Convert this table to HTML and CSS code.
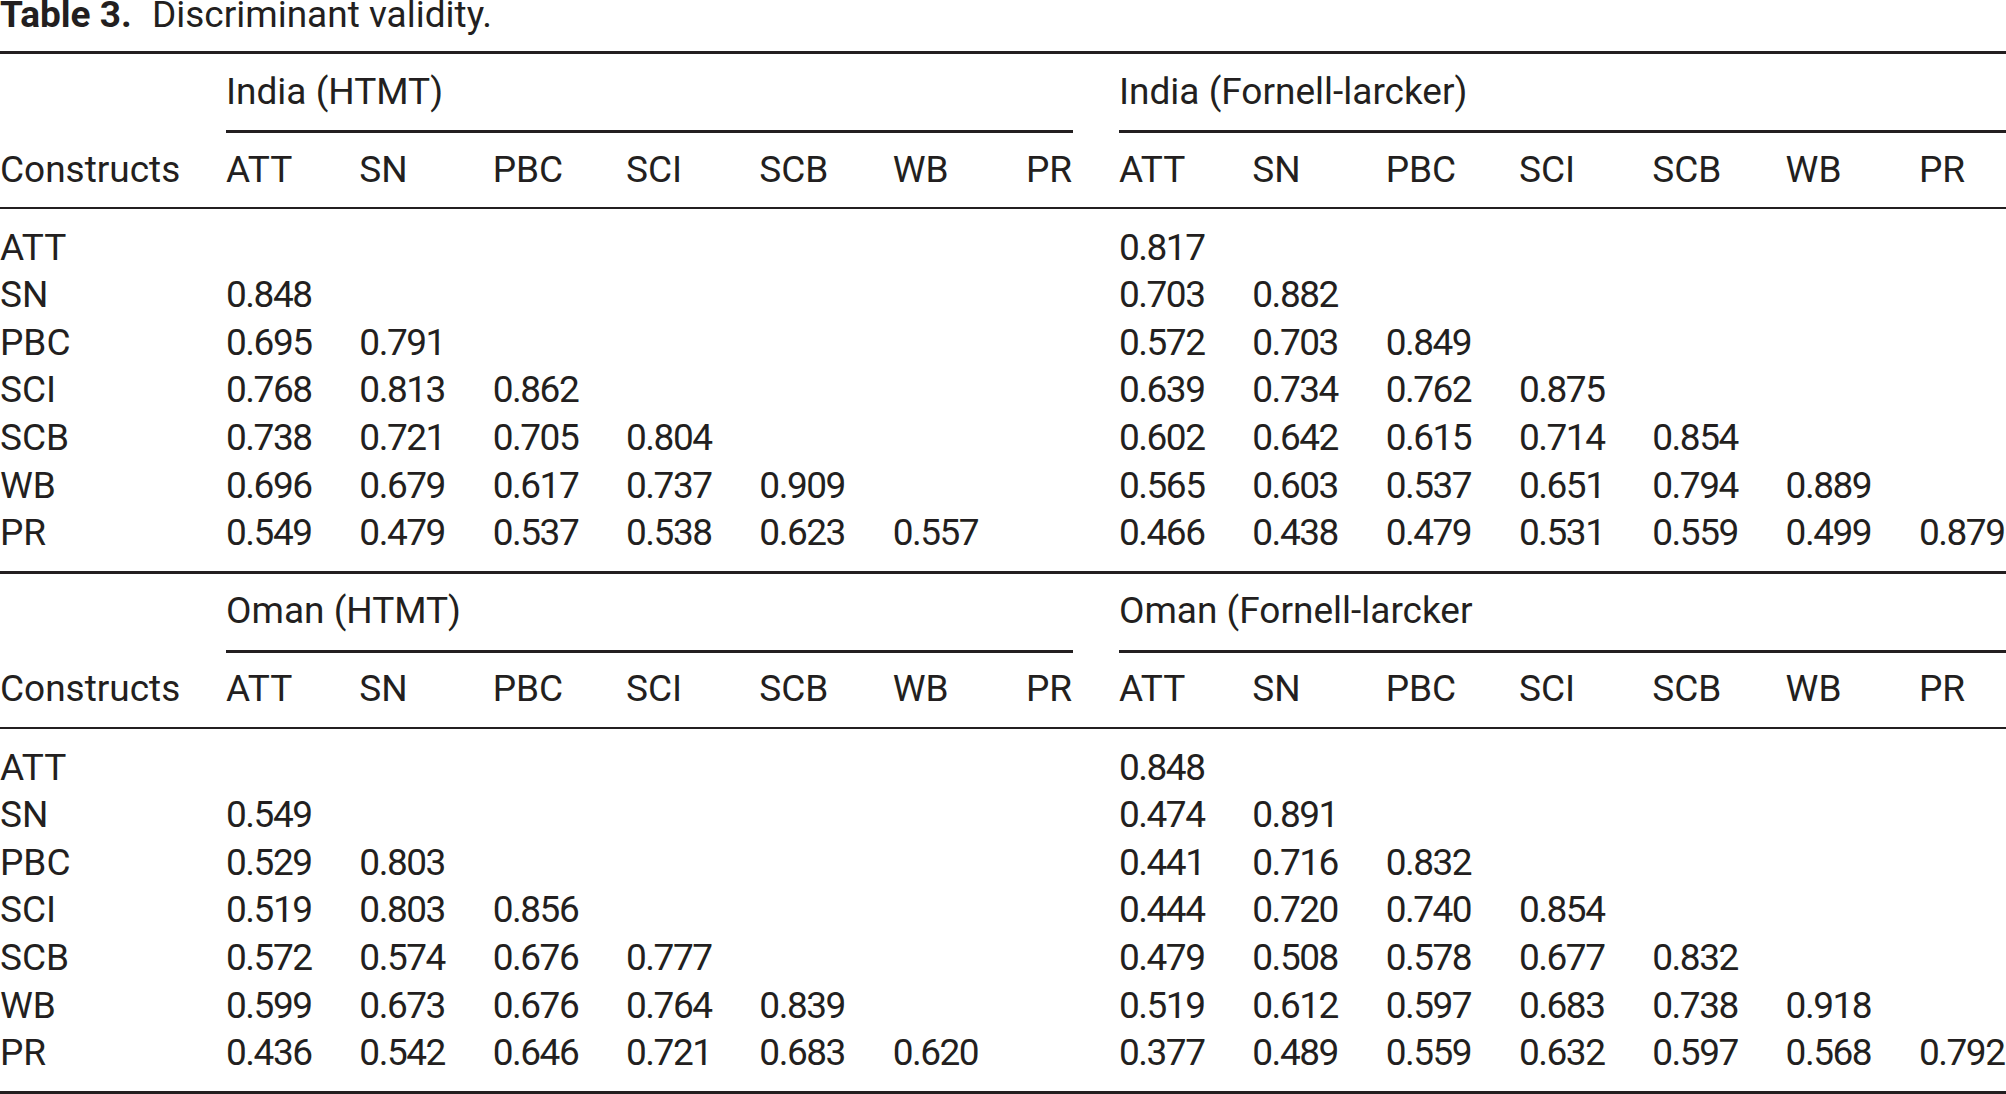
FILE: index.html
```html
<!DOCTYPE html>
<html lang="en">
<head>
<meta charset="utf-8">
<title>Table 3. Discriminant validity.</title>
<link rel="stylesheet" href="styles.css">
</head>
<body>
<div class="caption"><strong class="label">Table 3.</strong> Discriminant validity.</div>
<table class="dv">
  <colgroup>
    <col class="c-label">
    <col class="c-val"><col class="c-val"><col class="c-val"><col class="c-val"><col class="c-val"><col class="c-val">
    <col class="c-last">
    <col class="c-gap">
    <col class="c-val"><col class="c-val"><col class="c-val"><col class="c-val"><col class="c-val"><col class="c-val">
    <col class="c-end">
  </colgroup>
  <tbody>
    <tr class="group-row"><td></td><td colspan="7" class="group">India (HTMT)</td><td></td><td colspan="7" class="group">India (Fornell-larcker)</td></tr>
    <tr class="head-row"><th>Constructs</th><th>ATT</th><th>SN</th><th>PBC</th><th>SCI</th><th>SCB</th><th>WB</th><th>PR</th><th></th><th>ATT</th><th>SN</th><th>PBC</th><th>SCI</th><th>SCB</th><th>WB</th><th>PR</th></tr>
    <tr class="row first"><td>ATT</td><td></td><td></td><td></td><td></td><td></td><td></td><td></td><td></td><td class="num">0.817</td><td></td><td></td><td></td><td></td><td></td><td></td></tr>
    <tr class="row"><td>SN</td><td class="num">0.848</td><td></td><td></td><td></td><td></td><td></td><td></td><td></td><td class="num">0.703</td><td class="num">0.882</td><td></td><td></td><td></td><td></td><td></td></tr>
    <tr class="row"><td>PBC</td><td class="num">0.695</td><td class="num">0.791</td><td></td><td></td><td></td><td></td><td></td><td></td><td class="num">0.572</td><td class="num">0.703</td><td class="num">0.849</td><td></td><td></td><td></td><td></td></tr>
    <tr class="row"><td>SCI</td><td class="num">0.768</td><td class="num">0.813</td><td class="num">0.862</td><td></td><td></td><td></td><td></td><td></td><td class="num">0.639</td><td class="num">0.734</td><td class="num">0.762</td><td class="num">0.875</td><td></td><td></td><td></td></tr>
    <tr class="row"><td>SCB</td><td class="num">0.738</td><td class="num">0.721</td><td class="num">0.705</td><td class="num">0.804</td><td></td><td></td><td></td><td></td><td class="num">0.602</td><td class="num">0.642</td><td class="num">0.615</td><td class="num">0.714</td><td class="num">0.854</td><td></td><td></td></tr>
    <tr class="row"><td>WB</td><td class="num">0.696</td><td class="num">0.679</td><td class="num">0.617</td><td class="num">0.737</td><td class="num">0.909</td><td></td><td></td><td></td><td class="num">0.565</td><td class="num">0.603</td><td class="num">0.537</td><td class="num">0.651</td><td class="num">0.794</td><td class="num">0.889</td><td></td></tr>
    <tr class="row last"><td>PR</td><td class="num">0.549</td><td class="num">0.479</td><td class="num">0.537</td><td class="num">0.538</td><td class="num">0.623</td><td class="num">0.557</td><td></td><td></td><td class="num">0.466</td><td class="num">0.438</td><td class="num">0.479</td><td class="num">0.531</td><td class="num">0.559</td><td class="num">0.499</td><td class="num">0.879</td></tr>
  </tbody>
  <tbody>
    <tr class="group-row"><td></td><td colspan="7" class="group">Oman (HTMT)</td><td></td><td colspan="7" class="group">Oman (Fornell-larcker</td></tr>
    <tr class="head-row"><th>Constructs</th><th>ATT</th><th>SN</th><th>PBC</th><th>SCI</th><th>SCB</th><th>WB</th><th>PR</th><th></th><th>ATT</th><th>SN</th><th>PBC</th><th>SCI</th><th>SCB</th><th>WB</th><th>PR</th></tr>
    <tr class="row first"><td>ATT</td><td></td><td></td><td></td><td></td><td></td><td></td><td></td><td></td><td class="num">0.848</td><td></td><td></td><td></td><td></td><td></td><td></td></tr>
    <tr class="row"><td>SN</td><td class="num">0.549</td><td></td><td></td><td></td><td></td><td></td><td></td><td></td><td class="num">0.474</td><td class="num">0.891</td><td></td><td></td><td></td><td></td><td></td></tr>
    <tr class="row"><td>PBC</td><td class="num">0.529</td><td class="num">0.803</td><td></td><td></td><td></td><td></td><td></td><td></td><td class="num">0.441</td><td class="num">0.716</td><td class="num">0.832</td><td></td><td></td><td></td><td></td></tr>
    <tr class="row"><td>SCI</td><td class="num">0.519</td><td class="num">0.803</td><td class="num">0.856</td><td></td><td></td><td></td><td></td><td></td><td class="num">0.444</td><td class="num">0.720</td><td class="num">0.740</td><td class="num">0.854</td><td></td><td></td><td></td></tr>
    <tr class="row"><td>SCB</td><td class="num">0.572</td><td class="num">0.574</td><td class="num">0.676</td><td class="num">0.777</td><td></td><td></td><td></td><td></td><td class="num">0.479</td><td class="num">0.508</td><td class="num">0.578</td><td class="num">0.677</td><td class="num">0.832</td><td></td><td></td></tr>
    <tr class="row"><td>WB</td><td class="num">0.599</td><td class="num">0.673</td><td class="num">0.676</td><td class="num">0.764</td><td class="num">0.839</td><td></td><td></td><td></td><td class="num">0.519</td><td class="num">0.612</td><td class="num">0.597</td><td class="num">0.683</td><td class="num">0.738</td><td class="num">0.918</td><td></td></tr>
    <tr class="row last"><td>PR</td><td class="num">0.436</td><td class="num">0.542</td><td class="num">0.646</td><td class="num">0.721</td><td class="num">0.683</td><td class="num">0.620</td><td></td><td></td><td class="num">0.377</td><td class="num">0.489</td><td class="num">0.559</td><td class="num">0.632</td><td class="num">0.597</td><td class="num">0.568</td><td class="num">0.792</td></tr>
  </tbody>
</table>
</body>
</html>
```

FILE: styles.css
```css
html, body {
  margin: 0;
  padding: 0;
  background: #ffffff;
  overflow: hidden;
}

body {
  font-family: Roboto, "Liberation Sans", sans-serif;
  font-size: 37px;
  color: #231f20;
  width: 2006px;
}

.caption {
  line-height: 30px;
  height: 30px;
  margin-bottom: 21px;
  white-space: nowrap;
}

.caption .label {
  font-weight: 700;
  margin-right: 11px;
}

.dv {
  width: 2006px;
  table-layout: fixed;
  border-collapse: separate;
  border-spacing: 0;
  border-top: 3px solid #231f20;
}

.c-label { width: 226px; }
.c-val { width: 133.33px; }
.c-last { width: 46.67px; }
.c-gap { width: 46.33px; }
.c-end { width: 87px; }

.dv td,
.dv th {
  padding: 0;
  text-align: left;
  font-weight: 400;
  white-space: nowrap;
  vertical-align: top;
  overflow: visible;
}

.group-row td {
  line-height: 48px;
  padding-top: 13.5px;
  padding-bottom: 14.5px;
}

.group-row td.group {
  border-bottom: 3px solid #231f20;
}

.head-row th {
  line-height: 48px;
  padding-top: 12.5px;
  padding-bottom: 13.5px;
  border-bottom: 2px solid #231f20;
}

.row td {
  line-height: 47.6px;
}

.row.first td {
  padding-top: 14.7px;
}

.row.last td {
  padding-bottom: 14.1px;
  border-bottom: 3px solid #231f20;
}

.num {
  letter-spacing: -0.04em;
}
```
